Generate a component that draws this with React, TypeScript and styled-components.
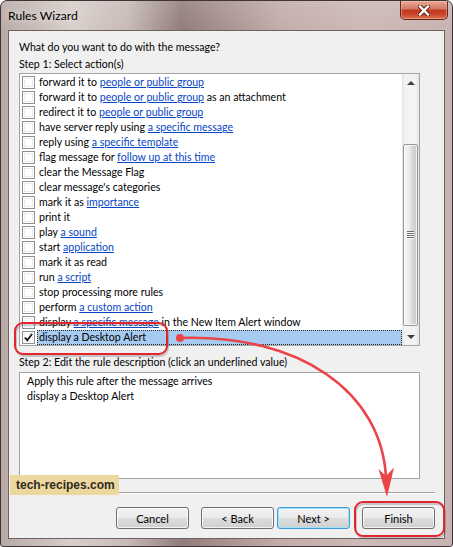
import React from "react";
import styled, { createGlobalStyle } from "styled-components";

const UI_FONT = `Lato, "Noto Sans", "Open Sans", sans-serif`;

const GlobalStyle = createGlobalStyle`
  html, body {
    margin: 0;
    padding: 0;
    background: #ffffff;
  }
  body {
    font-family: ${UI_FONT};
  }
`;

type Action = {
  before: string;
  link?: string;
  after?: string;
};

const actions: Action[] = [
  { before: "forward it to ", link: "people or public group" },
  { before: "forward it to ", link: "people or public group", after: " as an attachment" },
  { before: "redirect it to ", link: "people or public group" },
  { before: "have server reply using ", link: "a specific message" },
  { before: "reply using ", link: "a specific template" },
  { before: "flag message for ", link: "follow up at this time" },
  { before: "clear the Message Flag" },
  { before: "clear message's categories" },
  { before: "mark it as ", link: "importance" },
  { before: "print it" },
  { before: "play ", link: "a sound" },
  { before: "start ", link: "application" },
  { before: "mark it as read" },
  { before: "run ", link: "a script" },
  { before: "stop processing more rules" },
  { before: "perform ", link: "a custom action" },
  { before: "display ", link: "a specific message", after: " in the New Item Alert window" },
  { before: "display a Desktop Alert" },
];

const SELECTED = actions.length - 1;

const Window = styled.div`
  position: relative;
  width: 453px;
  height: 547px;
  box-sizing: border-box;
  display: flex;
  flex-direction: column;
  padding: 0 7px 7px 7px;
  border: 1px solid #3f3535;
  border-radius: 7px 7px 3px 3px;
  background:
    linear-gradient(180deg, rgba(255, 255, 255, 0.12) 0%, rgba(255, 255, 255, 0) 30px),
    linear-gradient(90deg, #b9aaa7 0%, #d8ceca 16%, #c8bab7 28%, #917d7b 40%, #a89290 50%, #c2adaa 62%, #ccb8b4 80%, #c7b3af 100%);
  font-family: ${UI_FONT};
  font-size: 10.6px;
  color: #000;
  overflow: hidden;
`;

const TitleBar = styled.div`
  height: 29px;
  display: flex;
  align-items: flex-start;
  flex: none;
`;

const Title = styled.div`
  margin-top: 7px;
  line-height: 15px;
  font-size: 12.2px;
  color: #000;
  text-shadow: 0 0 8px rgba(255, 255, 255, 0.9);
`;

const CloseButton = styled.div`
  margin-left: auto;
  margin-right: -3px;
  width: 48px;
  height: 19px;
  box-sizing: border-box;
  display: flex;
  align-items: center;
  justify-content: center;
  border: 1px solid #5e2a22;
  border-top: none;
  border-radius: 0 0 5px 5px;
  background: linear-gradient(180deg, #e9a895 0%, #d57a62 42%, #c13a20 52%, #c9472a 75%, #dc7450 100%);
  box-shadow: inset 0 0 0 1px rgba(255, 220, 210, 0.35);
`;

const Client = styled.div`
  flex: 1;
  display: flex;
  flex-direction: column;
  background: #f0f0f0;
  border: 1px solid #6f6261;
  padding: 9px 0 0 10px;
`;

const Label = styled.div<{ $top?: number }>`
  line-height: 15px;
  height: 15px;
  margin-top: ${(p) => p.$top ?? 0}px;
  white-space: nowrap;
`;

const ListBox = styled.div`
  width: 401px;
  height: 273px;
  box-sizing: border-box;
  margin-top: 1px;
  border: 1px solid #a4a4a4;
  background: #fff;
  display: flex;
`;

const Rows = styled.div`
  flex: 1;
  padding-top: 1px;
  display: flex;
  flex-direction: column;
`;

const Row = styled.div`
  height: 15px;
  display: flex;
  align-items: center;
`;

const CheckBox = styled.span`
  flex: none;
  width: 13px;
  height: 13px;
  box-sizing: border-box;
  margin-left: 2px;
  border: 1px solid #8e8f8f;
  background: #fff;
  box-shadow: inset 0 0 0 1px #ffffff, inset 0 0 0 2px #ececec;
  display: flex;
  align-items: center;
  justify-content: center;
`;

const RowText = styled.span<{ $selected?: boolean }>`
  flex: 1;
  height: 15px;
  box-sizing: border-box;
  margin-left: 2px;
  padding: 0 ${(p) => (p.$selected ? 1 : 2)}px;
  line-height: ${(p) => (p.$selected ? 13 : 15)}px;
  white-space: nowrap;
  background: ${(p) => (p.$selected ? "#a7cbf0" : "transparent")};
  border: ${(p) => (p.$selected ? "1px dotted #2a2a2a" : "none")};
`;

const Link = styled.span`
  color: #0646c4;
  text-decoration: underline;
`;

const ScrollBar = styled.div`
  flex: none;
  width: 17px;
  display: flex;
  flex-direction: column;
  background: linear-gradient(90deg, #e3e3e3 0%, #f3f3f3 18%, #f3f3f3 82%, #e3e3e3 100%);
`;

const ArrowButton = styled.div`
  height: 17px;
  flex: none;
  display: flex;
  align-items: center;
  justify-content: center;
`;

const Arrow = styled.span<{ $down?: boolean }>`
  width: 0;
  height: 0;
  border-left: 4px solid transparent;
  border-right: 4px solid transparent;
  ${(p) => (p.$down ? "border-top: 4px solid #3f3f3f;" : "border-bottom: 4px solid #3f3f3f;")}
`;

const Track = styled.div`
  flex: 1;
  display: flex;
  flex-direction: column;
  align-items: center;
`;

const Thumb = styled.div`
  margin-top: 53px;
  width: 15px;
  height: 182px;
  box-sizing: border-box;
  border: 1px solid #989898;
  border-radius: 2px;
  background: linear-gradient(90deg, #f4f4f4 0%, #ececec 45%, #dcdcdc 55%, #c9c9c9 100%);
  box-shadow: inset 0 0 0 1px rgba(255, 255, 255, 0.7);
  display: flex;
  align-items: center;
  justify-content: center;
`;

const Grip = styled.div`
  width: 7px;
  height: 8px;
  background: repeating-linear-gradient(180deg, #6f6f6f 0px, #6f6f6f 1px, #fafafa 1px, #fafafa 2px);
`;

const DescBox = styled.div`
  width: 401px;
  height: 107px;
  box-sizing: border-box;
  margin-top: 2px;
  padding: 1px 7px;
  border: 1px solid #a4a4a4;
  background: #fff;
  line-height: 15px;
`;

const Separator = styled.div`
  margin-top: 13px;
  margin-left: -7px;
  width: 423px;
  border-top: 1px solid #a0a0a0;
  border-bottom: 1px solid #ffffff;
`;

const ButtonRow = styled.div`
  margin-top: 13px;
  padding-right: 9px;
  display: flex;
  justify-content: flex-end;
  gap: 12px;
`;

const ButtonGroup = styled.div`
  display: flex;
  gap: 3px;
`;

const Button = styled.button<{ $default?: boolean }>`
  width: 73px;
  height: 22px;
  box-sizing: border-box;
  padding: 0;
  font-family: ${UI_FONT};
  font-size: 11px;
  color: #000;
  border: 1px solid ${(p) => (p.$default ? "#3d9be0" : "#707070")};
  border-radius: 3px;
  background: linear-gradient(180deg, #f2f2f2 0%, #ebebeb 48%, #dddddd 52%, #cfcfcf 100%);
  box-shadow: inset 0 0 0 1px ${(p) => (p.$default ? "#9fe3fb" : "rgba(255, 255, 255, 0.75)")};
`;

const Watermark = styled.div`
  position: absolute;
  left: 9px;
  top: 474px;
  width: 109px;
  height: 20px;
  box-sizing: border-box;
  padding-left: 6px;
  background: #ecd89f;
  font-family: "Liberation Sans", Arial, sans-serif;
  font-weight: bold;
  font-size: 12px;
  line-height: 20px;
  color: #2e2a22;
`;

const Overlay = styled.svg`
  position: absolute;
  left: -1px;
  top: -1px;
  pointer-events: none;
`;

function CloseGlyph() {
  return (
    <svg width="12" height="11" viewBox="0 0 12 11">
      <path d="M2 1.5 L10 9.5 M10 1.5 L2 9.5" stroke="#5a1e16" strokeWidth="4.2" strokeLinecap="square" />
      <path d="M2 1.5 L10 9.5 M10 1.5 L2 9.5" stroke="#ffffff" strokeWidth="2.4" strokeLinecap="square" />
    </svg>
  );
}

function CheckMark() {
  return (
    <svg width="9" height="9" viewBox="0 0 9 9">
      <path d="M1 4.5 L3.3 7.2 L8 1" fill="none" stroke="#111" strokeWidth="1.8" />
    </svg>
  );
}

function Annotations() {
  const red = "#e3252d";
  return (
    <Overlay width="453" height="547" viewBox="0 0 453 547">
      <rect x="15" y="323.5" width="152" height="31" rx="8" fill="none" stroke="rgba(0,0,0,0.18)" strokeWidth="2" transform="translate(1 1.5)" />
      <rect x="15" y="323" width="152" height="31" rx="8" fill="none" stroke={red} strokeWidth="2" />
      <rect x="355" y="502.5" width="89" height="34" rx="8" fill="none" stroke="rgba(0,0,0,0.18)" strokeWidth="2" transform="translate(1 1.5)" />
      <rect x="355" y="502" width="89" height="34" rx="8" fill="none" stroke={red} strokeWidth="2" />
      <circle cx="180" cy="338" r="4" fill="#ea4449" />
      <path d="M180 338 C 300 334, 382 392, 386 478" fill="none" stroke="#ea4449" strokeWidth="2.6" />
      <path d="M378.5 469 L387 497 L394 467.5 L386 476 Z" fill="#ea4449" />
    </Overlay>
  );
}

export default function App() {
  return (
    <>
      <GlobalStyle />
      <Window>
        <TitleBar>
          <Title>Rules Wizard</Title>
          <CloseButton>
            <CloseGlyph />
          </CloseButton>
        </TitleBar>
        <Client>
          <Label>What do you want to do with the message?</Label>
          <Label $top={2}>Step 1: Select action(s)</Label>
          <ListBox>
            <Rows>
              {actions.map((a, i) => (
                <Row key={i}>
                  <CheckBox>{i === SELECTED && <CheckMark />}</CheckBox>
                  <RowText $selected={i === SELECTED}>
                    {a.before}
                    {a.link && <Link>{a.link}</Link>}
                    {a.after}
                  </RowText>
                </Row>
              ))}
            </Rows>
            <ScrollBar>
              <ArrowButton>
                <Arrow />
              </ArrowButton>
              <Track>
                <Thumb>
                  <Grip />
                </Thumb>
              </Track>
              <ArrowButton>
                <Arrow $down />
              </ArrowButton>
            </ScrollBar>
          </ListBox>
          <Label $top={9}>Step 2: Edit the rule description (click an underlined value)</Label>
          <DescBox>
            Apply this rule after the message arrives
            <br />
            display a Desktop Alert
          </DescBox>
          <Separator />
          <ButtonRow>
            <Button>Cancel</Button>
            <ButtonGroup>
              <Button>&lt; Back</Button>
              <Button $default>Next &gt;</Button>
            </ButtonGroup>
            <Button>Finish</Button>
          </ButtonRow>
        </Client>
        <Watermark>tech-recipes.com</Watermark>
        <Annotations />
      </Window>
    </>
  );
}
